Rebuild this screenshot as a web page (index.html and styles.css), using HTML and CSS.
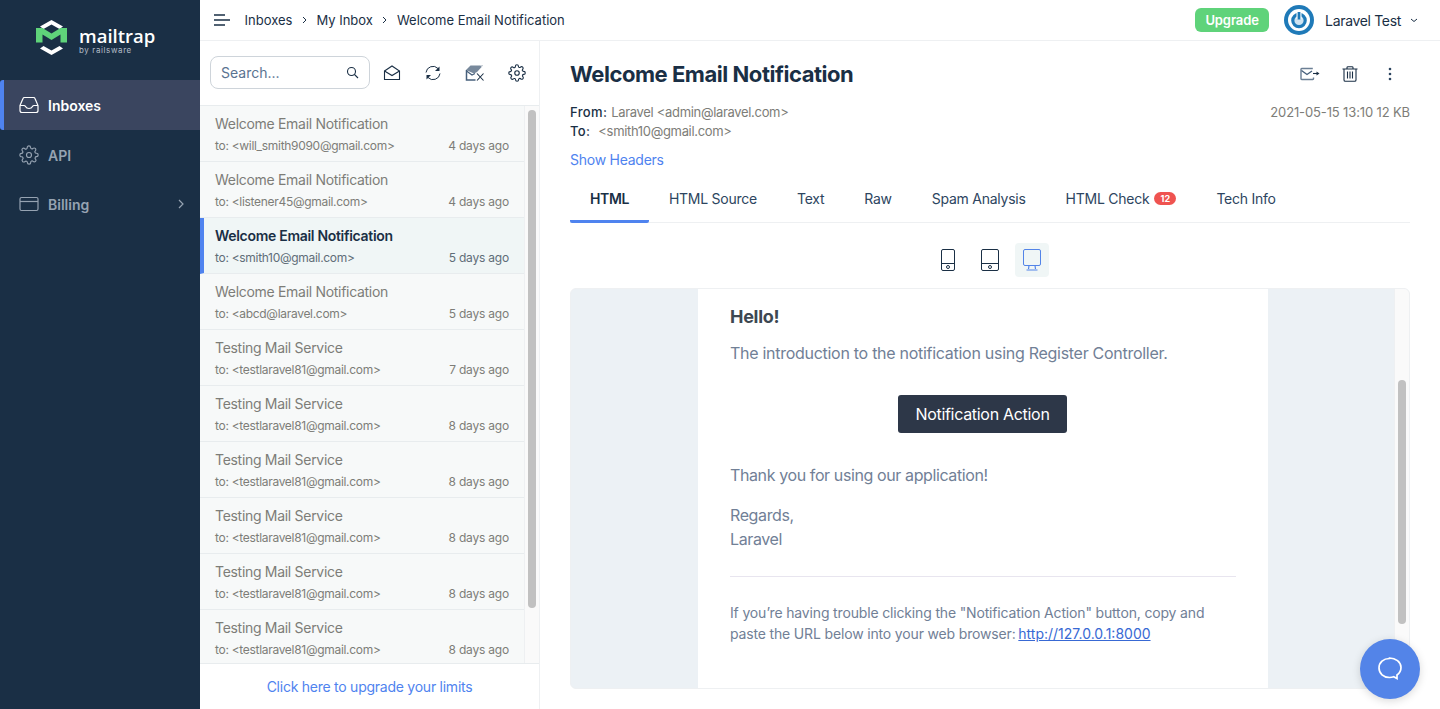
FILE: index.html
```html
<!DOCTYPE html>
<html lang="en">
<head>
<meta charset="utf-8">
<title>Welcome Email Notification</title>
<link rel="stylesheet" href="styles.css">
</head>
<body>
<div class="app">
  <aside class="sidebar">
    <div class="logo">
      <svg class="logo-mark" width="33" height="35" viewBox="0 0 33 35">
        <path d="M16.500 0 28 6.500 24.500 9 16.500 4.500 8.500 9 5 6.500z" fill="#fff"/>
        <path d="M16.500 35 28 28.500 24.500 26 16.500 30.500 8.500 26 5 28.500z" fill="#fff"/>
        <path d="M1 8h6.500l9 5.500 9-5.500H32v14.500h-6.500V14.500L16.500 20l-9-5.500v8H1z" fill="#5fd37a"/>
      </svg>
      <div class="logo-text">
        <span class="logo-name">mailtrap</span>
        <span class="logo-by">by railsware</span>
      </div>
    </div>
    <nav class="nav">
      <a class="nav-item active">
        <svg class="nav-icon" width="20" height="20" viewBox="0 0 20 20" fill="none" stroke="currentColor" stroke-width="1.200"><path d="M1 10.500 4 3.500Q4.300 2.500 5.500 2.500h9q1.200 0 1.500 1l3 7v5q0 2-2 2H3q-2 0-2-2z"/><path d="M1 10.500h4q1 0 1.500 1 1 2 3.500 2t3.500-2q.5-1 1.500-1h4"/></svg>
        <span>Inboxes</span>
      </a>
      <a class="nav-item">
        <svg class="nav-icon" width="20" height="20" viewBox="0 0 24 24" fill="none" stroke="currentColor" stroke-width="1.400"><circle cx="12" cy="12" r="3"/><path d="M19.400 15a1.650 1.650 0 0 0 .33 1.820l.06.06a2 2 0 1 1-2.830 2.830l-.06-.06a1.650 1.650 0 0 0-2.820 1.170V21a2 2 0 0 1-4 0v-.09a1.650 1.650 0 0 0-2.820-1.120l-.06.06a2 2 0 1 1-2.830-2.830l.06-.06a1.650 1.650 0 0 0-1.170-2.820H3a2 2 0 0 1 0-4h.09a1.650 1.650 0 0 0 1.120-2.820l-.06-.06a2 2 0 1 1 2.830-2.830l.06.06a1.650 1.650 0 0 0 2.820-1.170V3a2 2 0 0 1 4 0v.09a1.650 1.650 0 0 0 2.820 1.120l.06-.06a2 2 0 1 1 2.830 2.830l-.06.06a1.650 1.650 0 0 0 1.170 2.820H21a2 2 0 0 1 0 4h-.09a1.650 1.650 0 0 0-1.510 1.140z"/></svg>
        <span>API</span>
      </a>
      <a class="nav-item nav-billing">
        <svg class="nav-icon" width="20" height="20" viewBox="0 0 20 20" fill="none" stroke="currentColor" stroke-width="1.200"><rect x="1" y="3.500" width="18" height="13" rx="1.500"/><path d="M1 7.500h18"/></svg>
        <span>Billing</span>
        <svg class="nav-chevron" width="6" height="10" viewBox="0 0 6 10" fill="none" stroke="currentColor" stroke-width="1.200"><path d="M1 1l4 4-4 4"/></svg>
      </a>
    </nav>
  </aside>

  <div class="main">
    <header class="topbar">
      <svg class="burger" width="16" height="12" viewBox="0 0 16 12" fill="none" stroke="#1a2f45" stroke-width="1.500"><path d="M0 1h11M0 6h16M0 11h11"/></svg>
      <div class="crumbs">
        <span>Inboxes</span>
        <svg width="5" height="8" viewBox="0 0 5 8" fill="none" stroke="#1a2f45"><path d="M1 1l3 3-3 3"/></svg>
        <span>My Inbox</span>
        <svg width="5" height="8" viewBox="0 0 5 8" fill="none" stroke="#1a2f45"><path d="M1 1l3 3-3 3"/></svg>
        <span>Welcome Email Notification</span>
      </div>
      <div class="account">
        <span class="upgrade">Upgrade</span>
        <svg class="avatar" width="30" height="30" viewBox="0 0 30 30"><circle cx="15" cy="15" r="15" fill="#1f7ab8"/><circle cx="15" cy="15" r="11" fill="#fff"/><circle cx="15" cy="15.500" r="5" fill="#cfe3f1"/><circle cx="15" cy="15.500" r="6.200" fill="none" stroke="#1f7ab8" stroke-width="3.200"/><path d="M15 6v8" stroke="#fff" stroke-width="5"/><path d="M15 7v7.500" stroke="#1f7ab8" stroke-width="2.800"/></svg>
        <span class="account-name">Laravel Test</span>
        <svg class="caret" width="8" height="5" viewBox="0 0 8 5" fill="none" stroke="#1a2f45"><path d="M1 1l3 2.500L7 1"/></svg>
      </div>
    </header>

    <div class="panes">
      <section class="list-pane">
        <div class="toolbar">
          <div class="search">
            <span>Search...</span>
            <svg width="13" height="13" viewBox="0 0 13 13" fill="none" stroke="#1a2f45" stroke-width="1.100"><circle cx="5.500" cy="5.500" r="4"/><path d="M8.500 8.500 12 12"/></svg>
          </div>
          <div class="tools">
            <svg width="18" height="18" viewBox="0 0 18 18" fill="none" stroke="#1a2f45" stroke-width="1.100"><path d="M1.500 7 9 2l7.500 5v8.500h-15z"/><path d="M1.500 7 9 11.500 16.500 7"/></svg>
            <svg width="18" height="18" viewBox="0 0 18 18" fill="none" stroke="#1a2f45"><path d="M2 8.500A7 7 0 0 1 14 4.500"/><path d="M16 9.500a7 7 0 0 1-12 4"/><path d="M15.500 2.500V7H11z" fill="#1a2f45" stroke="none"/><path d="M2.500 15.500V11H7z" fill="#1a2f45" stroke="none"/></svg>
            <svg width="20" height="18" viewBox="0 0 20 18" fill="none"><path d="M1 6 5.500 1.500H18L12 8l-3 1.500z" fill="#78899c"/><path d="M1.500 6v10h9" stroke="#47607c" stroke-width="1.500"/><path d="M1.500 7 7 11l3-1.500" stroke="#47607c" stroke-width="1.200"/><path d="M12 9.500l6.500 7M18.500 9.500 12 16.500" stroke="#1a2f45" stroke-width="1.100"/><path d="M16 1.500l2.500 2.500" stroke="#fff"/></svg>
            <svg width="18" height="18" viewBox="0 0 24 24" fill="none" stroke="#1a2f45" stroke-width="1.500"><circle cx="12" cy="12" r="3"/><path d="M19.400 15a1.650 1.650 0 0 0 .33 1.820l.06.06a2 2 0 1 1-2.830 2.830l-.06-.06a1.650 1.650 0 0 0-2.820 1.170V21a2 2 0 0 1-4 0v-.09a1.650 1.650 0 0 0-2.820-1.120l-.06.06a2 2 0 1 1-2.830-2.830l.06-.06a1.650 1.650 0 0 0-1.170-2.820H3a2 2 0 0 1 0-4h.09a1.650 1.650 0 0 0 1.120-2.820l-.06-.06a2 2 0 1 1 2.830-2.830l.06.06a1.650 1.650 0 0 0 2.820-1.170V3a2 2 0 0 1 4 0v.09a1.650 1.650 0 0 0 2.820 1.120l.06-.06a2 2 0 1 1 2.830 2.830l-.06.06a1.650 1.650 0 0 0 1.170 2.820H21a2 2 0 0 1 0 4h-.09a1.650 1.650 0 0 0-1.510 1.140z"/></svg>
          </div>
        </div>
        <div class="list-wrap">
          <ul class="messages">
            <li class="msg"><div class="msg-subject">Welcome Email Notification</div><div class="msg-meta"><span>to: &lt;will_smith9090@gmail.com&gt;</span><span class="msg-age">4 days ago</span></div></li>
            <li class="msg"><div class="msg-subject">Welcome Email Notification</div><div class="msg-meta"><span>to: &lt;listener45@gmail.com&gt;</span><span class="msg-age">4 days ago</span></div></li>
            <li class="msg selected"><div class="msg-subject">Welcome Email Notification</div><div class="msg-meta"><span>to: &lt;smith10@gmail.com&gt;</span><span class="msg-age">5 days ago</span></div></li>
            <li class="msg"><div class="msg-subject">Welcome Email Notification</div><div class="msg-meta"><span>to: &lt;abcd@laravel.com&gt;</span><span class="msg-age">5 days ago</span></div></li>
            <li class="msg"><div class="msg-subject">Testing Mail Service</div><div class="msg-meta"><span>to: &lt;testlaravel81@gmail.com&gt;</span><span class="msg-age">7 days ago</span></div></li>
            <li class="msg"><div class="msg-subject">Testing Mail Service</div><div class="msg-meta"><span>to: &lt;testlaravel81@gmail.com&gt;</span><span class="msg-age">8 days ago</span></div></li>
            <li class="msg"><div class="msg-subject">Testing Mail Service</div><div class="msg-meta"><span>to: &lt;testlaravel81@gmail.com&gt;</span><span class="msg-age">8 days ago</span></div></li>
            <li class="msg"><div class="msg-subject">Testing Mail Service</div><div class="msg-meta"><span>to: &lt;testlaravel81@gmail.com&gt;</span><span class="msg-age">8 days ago</span></div></li>
            <li class="msg"><div class="msg-subject">Testing Mail Service</div><div class="msg-meta"><span>to: &lt;testlaravel81@gmail.com&gt;</span><span class="msg-age">8 days ago</span></div></li>
            <li class="msg"><div class="msg-subject">Testing Mail Service</div><div class="msg-meta"><span>to: &lt;testlaravel81@gmail.com&gt;</span><span class="msg-age">8 days ago</span></div></li>
          </ul>
          <div class="list-scroll"><div class="list-thumb"></div></div>
        </div>
        <a class="limits">Click here to upgrade your limits</a>
      </section>

      <section class="detail">
        <div class="detail-head">
          <h1>Welcome Email Notification</h1>
          <div class="detail-actions">
            <svg width="20" height="14" viewBox="0 0 20 14" fill="none" stroke="#6b7f95" stroke-width="1.400"><path d="M13.500 10.500v1.300q0 .7-.7.7H1.700q-.7 0-.7-.7V2.200q0-.7.7-.7h11.100"/><path d="M1.500 3.500l5.500 4 5-3.500" stroke="#47607c"/><path d="M13 6.500h4" stroke="#1a2f45" stroke-width="1.100"/><path d="M16.500 4.500l3 2-3 2z" fill="#1a2f45" stroke="none"/></svg>
            <svg width="16" height="16" viewBox="0 0 16 16" fill="none" stroke="#1a2f45" stroke-width="1.100"><path d="M.5 3h15M5 3V1.500Q5 .7 6 .7h4q1 0 1 .8V3M2 3v11q0 1.300 1.300 1.300h9.400Q14 15.300 14 14V3M5.500 5.500v7M8 5.500v7M10.500 5.500v7"/></svg>
            <svg class="dots" width="4" height="14" viewBox="0 0 4 14" fill="#2d4560"><circle cx="2" cy="2" r="1.300"/><circle cx="2" cy="7" r="1.300"/><circle cx="2" cy="12" r="1.300"/></svg>
          </div>
        </div>
        <div class="addr-row">
          <div class="addr">
            <div class="addr-line"><b>From:</b><span>Laravel &lt;admin@laravel.com&gt;</span></div>
            <div class="addr-line"><b>To:</b><span class="addr-to">&lt;smith10@gmail.com&gt;</span></div>
          </div>
          <div class="addr-date">2021-05-15 13:10 12 KB</div>
        </div>
        <a class="show-headers">Show Headers</a>
        <div class="tabs">
          <span class="tab active">HTML</span>
          <span class="tab">HTML Source</span>
          <span class="tab">Text</span>
          <span class="tab">Raw</span>
          <span class="tab">Spam Analysis</span>
          <span class="tab">HTML Check<em class="badge">12</em></span>
          <span class="tab">Tech Info</span>
        </div>
        <div class="devices">
          <span class="device"><svg width="14" height="22" viewBox="0 0 14 22" fill="none" stroke="#1a2f45"><rect x=".5" y=".5" width="13" height="21" rx="1.500"/><path d="M.5 14.500h13"/><circle cx="7" cy="18" r="1.500"/></svg></span>
          <span class="device"><svg width="18" height="22" viewBox="0 0 18 22" fill="none" stroke="#1a2f45"><rect x=".5" y=".5" width="17" height="21" rx="1.500"/><path d="M.5 14.500h17"/><circle cx="9" cy="18" r="1.500"/></svg></span>
          <span class="device current"><svg width="18" height="22" viewBox="0 0 18 22" fill="none" stroke="#5384e8"><rect x=".5" y=".5" width="17" height="16" rx="1.500"/><path d="M6 16.500 5.500 20M12 16.500l.5 3.500M3.500 21h11" stroke-width="1.200"/></svg></span>
        </div>
        <div class="preview">
          <div class="mail">
            <h2>Hello!</h2>
            <p class="mail-intro">The introduction to the notification using Register Controller.</p>
            <div class="mail-action"><span class="mail-btn">Notification Action</span></div>
            <p class="mail-thanks">Thank you for using our application!</p>
            <p class="mail-regards">Regards,<br>Laravel</p>
            <hr class="mail-rule">
            <p class="mail-small">If you’re having trouble clicking the "Notification Action" button, copy and paste the URL below into your web browser: <a>http://127.0.0.1:8000</a></p>
          </div>
          <div class="preview-scroll"><div class="preview-thumb"></div></div>
        </div>
      </section>
    </div>
  </div>
</div>
<button class="chat" aria-label="Chat">
  <svg width="26" height="26" viewBox="0 0 26 26" fill="none" stroke="#fff" stroke-width="1.700"><path d="M12.500 2.500C6.500 2.500 2 6.500 2 12s4.500 9.500 10.500 9.500c1.500 0 3-.2 4.200-.7l3.300 1.700v-3.500c2.500-1.800 4-4.300 4-7.500 0-5.500-5.500-9.500-11.500-9.500z"/></svg>
</button>
</body>
</html>
```
FILE: styles.css
```css
* { box-sizing: border-box; }
html, body { margin: 0; height: 100%; overflow: hidden; }
body { font-family: Inter, "Noto Sans", sans-serif; color: #1a2f45; background: #fff; }
.app { display: flex; height: 709px; }

.sidebar { width: 200px; flex: none; background: #1a2f45; }
.logo { height: 80px; display: flex; align-items: flex-start; padding: 20px 0 0 35px; gap: 11px; }
.logo-mark { flex: none; }
.logo-text { display: flex; flex-direction: column; color: #fff; padding-top: 7px; }
.logo-name { font-family: "Open Sans", sans-serif; font-size: 18.500px; line-height: 18px; font-weight: 600; }
.logo-by { font-size: 8px; line-height: 9px; margin-top: 1px; color: #b4bdc7; letter-spacing: .6px; }
.nav { display: flex; flex-direction: column; }
.nav-item { height: 50px; display: flex; align-items: center; gap: 9px; padding-left: 19px; padding-right: 16px; color: #96a3b2; font-size: 14px; font-weight: 600; }
.nav-item.active { background: #3a455f; color: #fff; border-left: 4px solid #4f83ef; border-radius: 3px 0 0 3px; padding-left: 15px; }
.nav-billing { margin-top: -1px; }
.nav-item .nav-icon { flex: none; }
.nav-chevron { margin-left: auto; }

.main { flex: 1; min-width: 0; display: flex; flex-direction: column; }
.topbar { height: 41px; flex: none; border-bottom: 1px solid #eef0f2; display: flex; align-items: center; padding: 0 22px 0 14px; }
.burger { flex: none; }
.crumbs { display: flex; align-items: center; gap: 9.500px; margin-left: 14.500px; font-size: 13px; }
.account { margin-left: auto; display: flex; align-items: center; }
.upgrade { width: 74px; height: 24px; border-radius: 6px; background: #5fd37a; color: #fff; font-size: 13px; font-weight: 600; letter-spacing: -.1px; display: flex; align-items: center; justify-content: center; margin-right: 15px; }
.account-name { font-size: 14px; margin-left: 11px; letter-spacing: -.33px; }
.caret { margin-left: 9px; }

.panes { flex: 1; min-height: 0; display: flex; }
.list-pane { width: 340px; flex: none; border-right: 1px solid #eef0f2; display: flex; flex-direction: column; }
.toolbar { height: 65px; flex: none; border-bottom: 1px solid #e8ecee; display: flex; align-items: center; padding: 0 0 1px 10px; }
.search { width: 160px; height: 33px; border: 1px solid #ced4da; border-radius: 8px; display: flex; align-items: center; justify-content: space-between; padding: 0 10px; font-size: 14px; color: #5a7391; }
.tools { display: flex; align-items: center; margin-left: 13px; gap: 23px; }
.list-wrap { height: 558px; flex: none; display: flex; overflow: hidden; border-bottom: 1px solid #e8ecee; }
.messages { list-style: none; margin: 0; padding: 0; flex: 1; min-width: 0; background: #f7f9f9; }
.msg { height: 56px; border-bottom: 1px solid #e8ecee; padding: 8px 15px 0; color: #7d7d78; }
.msg-subject { font-size: 14px; line-height: 19px; letter-spacing: -.3px; }
.msg-meta { display: flex; justify-content: space-between; font-size: 12px; line-height: 15px; margin-top: 4.500px; letter-spacing: -.3px; }
.msg-age { letter-spacing: -.2px; }
.msg.selected { background: #f0f6f6; border-left: 4px solid #4f83ef; padding-left: 11px; color: #5f6d78; }
.msg.selected .msg-subject { color: #1a2f45; font-weight: 600; }
.list-scroll { width: 15px; flex: none; border-left: 1px solid #eef0f2; background: #fafafa; padding: 4px 3px 0 3px; }
.list-thumb { width: 8px; height: 498px; border-radius: 4px; background: #c1c1c1; }
.limits { flex: 1; display: flex; align-items: center; justify-content: center; color: #4f83ef; font-size: 14px; letter-spacing: -.25px; }

.detail { flex: 1; min-width: 0; padding: 0 30px; display: flex; flex-direction: column; }
.detail-head { height: 62px; flex: none; display: flex; align-items: center; justify-content: space-between; padding-top: 4px; }
h1 { margin: 0; font-size: 22px; line-height: 30px; font-weight: 700; letter-spacing: -.46px; }
.detail-actions { display: flex; align-items: center; gap: 22px; padding-right: 18px; }
.dots { margin-left: 8px; }
.addr-row { display: flex; justify-content: space-between; }
.addr-line { font-size: 13px; line-height: 19px; color: #7d7d78; display: flex; gap: 4px; align-items: baseline; letter-spacing: -.32px; }
.addr-line b { font-weight: 500; font-size: 13px; color: #1a2f45; letter-spacing: .35px; }
.addr-to { margin-left: 4px; }
.addr-date { font-size: 13px; color: #7d7d78; line-height: 19px; letter-spacing: -.13px; }
.show-headers { font-size: 14px; line-height: 20px; margin-top: 9px; color: #4f83ef; letter-spacing: -.25px; }
.tabs { height: 46px; flex: none; margin-top: 7px; border-bottom: 1px solid #eef0f2; display: flex; }
.tab { padding: 0 20px; font-size: 14px; line-height: 44px; color: #2d4560; display: flex; align-items: flex-start; letter-spacing: -.25px; }
.tab.active { color: #1a2f45; font-weight: 600; border-bottom: 3px solid #4f83ef; height: 46px; border-radius: 0 0 2px 2px; letter-spacing: -.4px; }
.badge { font-style: normal; margin: 15px 0 0 5px; width: 22px; height: 13px; border-radius: 7px; background: #ef5350; color: #fff; font-size: 9px; line-height: 13px; font-weight: 700; text-align: center; letter-spacing: 0; }
.devices { height: 65px; flex: none; display: flex; justify-content: center; align-items: flex-start; padding-top: 20px; gap: 8px; }
.device { width: 34px; height: 34px; display: flex; align-items: center; justify-content: center; border-radius: 4px; }
.device.current { background: #f0f6f6; }
.preview { height: 401px; flex: none; background: #ecf1f5; border-radius: 6px; border: 1px solid #eef0f2; display: flex; overflow: hidden; }
.mail { width: 570px; margin-left: 127px; background: #fff; padding: 17px 32px 0; color: #718096; flex: none; letter-spacing: -.28px; }
h2 { margin: 0; font-size: 18px; line-height: 22px; font-weight: 700; color: #3d4852; letter-spacing: -.3px; }
.mail-intro { margin: 13px 0 0; font-size: 16px; line-height: 24px; }
.mail-action { display: flex; justify-content: center; margin-top: 30px; }
.mail-btn { height: 38px; padding: 0 17.500px; margin-right: 1px; border-radius: 3px; background: #2d3748; color: #fff; font-size: 16px; line-height: 38px; letter-spacing: -.3px; }
.mail-thanks { margin: 30px 0 0; font-size: 16px; line-height: 24px; letter-spacing: -.39px; }
.mail-regards { margin: 16px 0 0; font-size: 16px; line-height: 24px; letter-spacing: -.39px; }
.mail-rule { margin: 25px 0 0; border: 0; border-top: 1px solid #e8e5ef; }
.mail-small { margin: 25px 0 0; font-size: 14px; line-height: 21px; letter-spacing: -.16px; }
.mail-small a { color: #3869d4; text-decoration: underline; letter-spacing: 0; margin-left: -1px; }
.preview-scroll { width: 15px; flex: none; margin-left: auto; background: #fafafa; border-left: 1px solid #eef0f2; padding: 91px 3px 0; }
.preview-thumb { width: 8px; height: 244px; border-radius: 4px; background: #c1c1c1; }

.chat { position: absolute; left: 1360px; top: 639px; width: 60px; height: 60px; border: 0; padding: 0; border-radius: 50%; background: #5384e8; box-shadow: 0 2px 8px rgba(0,0,0,.15); display: flex; align-items: center; justify-content: center; }
```
